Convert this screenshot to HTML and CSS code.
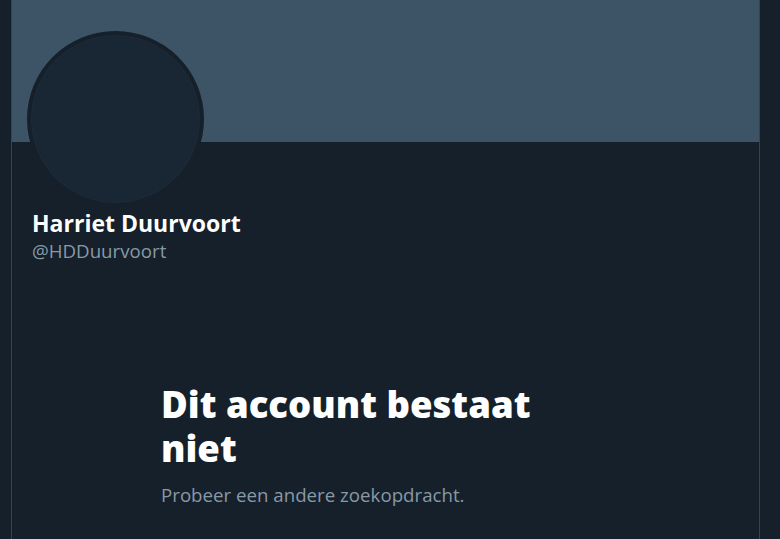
FILE: index.html
```html
<!DOCTYPE html>
<html>
<head>
<meta charset="utf-8">
<link rel="stylesheet" href="styles.css">
</head>
<body>
<div class="page">
  <main class="column">
    <div class="banner"></div>
    <div class="profile">
      <div class="avatar"></div>
      <div class="name">Harriet Duurvoort</div>
      <div class="handle">@HDDuurvoort</div>
    </div>
    <div class="empty">
      <h1 class="empty-title">Dit account bestaat niet</h1>
      <p class="empty-text">Probeer een andere zoekopdracht.</p>
    </div>
  </main>
</div>
</body>
</html>
```
FILE: styles.css
```css
html, body {
  margin: 0;
  padding: 0;
  background: #15202b;
  height: 100%;
  overflow: hidden;
}
.page {
  display: flex;
  padding-left: 11px;
  height: 100%;
}
.column {
  width: 747px;
  border-left: 1px solid #38444d;
  border-right: 1px solid #38444d;
  min-height: 100%;
  font-family: "Open Sans", "Noto Sans", sans-serif;
  color: #ffffff;
}
.banner {
  height: 142px;
  background: #3d5466;
}
.profile {
  position: relative;
  padding: 66px 20px 0 20px;
}
.avatar {
  position: absolute;
  left: 15px;
  top: -111px;
  width: 169px;
  height: 168px;
  border-radius: 50%;
  background: #192734;
  border: 4px solid #15202b;
  box-shadow: inset 0 0 0 1px #1e2c39;
}
.name {
  font-size: 23px;
  font-weight: 700;
  line-height: 30px;
}
.handle {
  font-size: 18.7px;
  color: #8899a6;
  line-height: 25px;
}
.empty {
  padding: 119px 0 0 149px;
  width: 420px;
}
.empty-title {
  margin: 0;
  font-size: 36.5px;
  font-weight: 800;
  line-height: 44px;
}
.empty-text {
  margin: 12px 0 0 0;
  font-size: 18.7px;
  color: #8899a6;
  line-height: 25px;
}
```
